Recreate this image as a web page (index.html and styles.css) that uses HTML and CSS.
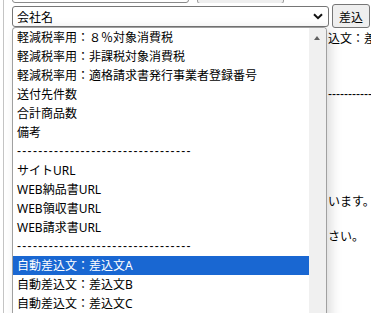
FILE: index.html
```html
<!DOCTYPE html>
<html lang="ja">
<head>
<meta charset="utf-8">
<link rel="stylesheet" href="styles.css">
</head>
<body>
<div class="page">
  <div class="top-strip">
    <div class="top-input"></div>
    <div class="top-button"></div>
  </div>
  <div class="form-row">
    <div class="select">
      <span class="select-value">会社名</span>
      <svg class="chevron" width="10" height="7" viewBox="0 0 10 7"><path d="M1 1.2 L5 5.2 L9 1.2" fill="none" stroke="#111" stroke-width="2"/></svg>
    </div>
    <button class="btn">差込</button>
  </div>
  <div class="bg-content">
    <p class="bg-line l1">込文：差</p>
    <p class="bg-line l2">-----------</p>
    <p class="bg-line l3">います。</p>
    <p class="bg-line l4">さい。</p>
  </div>
  <div class="dropdown">
    <ul class="options">
      <li>軽減税率用：８％対象消費税</li>
      <li>軽減税率用：非課税対象消費税</li>
      <li>軽減税率用：適格請求書発行事業者登録番号</li>
      <li>送付先件数</li>
      <li>合計商品数</li>
      <li>備考</li>
      <li class="sep">---------------------------------</li>
      <li>サイトURL</li>
      <li>WEB納品書URL</li>
      <li>WEB領収書URL</li>
      <li>WEB請求書URL</li>
      <li class="sep">---------------------------------</li>
      <li class="selected">自動差込文：差込文A</li>
      <li>自動差込文：差込文B</li>
      <li>自動差込文：差込文C</li>
    </ul>
    <div class="scrollbar">
      <span class="arrow-up"></span>
    </div>
  </div>
</div>
</body>
</html>
```
FILE: styles.css
```css
html, body {
  margin: 0;
  padding: 0;
  background: #fff;
}
body {
  font-family: "Noto Sans", "Noto Sans CJK JP", sans-serif;
  font-size: 12px;
  color: #000;
  overflow: hidden;
}
.page {
  position: relative;
  margin-left: 3px;
  border-left: 1px solid #c4c4c4;
  height: 313px;
  padding-left: 8px;
  box-sizing: border-box;
  overflow: hidden;
}
.top-strip {
  height: 3px;
  display: flex;
  align-items: flex-end;
  overflow: hidden;
}
.top-input {
  width: 177px;
  height: 20px;
  box-sizing: border-box;
  border: 1px solid #8a8a8a;
  border-radius: 3px;
  background: #fff;
  flex: none;
}
.top-button {
  margin-left: 8px;
  width: 87px;
  height: 20px;
  box-sizing: border-box;
  border: 1px solid #9a9a9a;
  border-radius: 3px;
  background: #efefef;
  flex: none;
  margin-bottom: -1px;
}
.form-row {
  display: flex;
  align-items: center;
  gap: 3px;
  margin-top: 1px;
  height: 24px;
}
.select {
  width: 317px;
  height: 21px;
  box-sizing: border-box;
  border: 1px solid #767676;
  border-radius: 3px;
  display: flex;
  align-items: center;
  justify-content: space-between;
  padding: 0 5px 0 4px;
  background: #fff;
}
.select-value {
  font-family: "Noto Sans CJK JP", sans-serif;
  line-height: 19px;
}
.chevron {
  display: block;
}
.btn {
  width: 38px;
  height: 24px;
  box-sizing: border-box;
  border: 1px solid #767676;
  border-radius: 3px;
  background: #efefef;
  font-family: "Noto Sans CJK JP", sans-serif;
  font-size: 12px;
  padding: 0;
  color: #000;
}
.bg-content {
  padding-left: 316px;
  white-space: nowrap;
}
.bg-line {
  margin: 0;
  line-height: 19px;
  font-family: "Noto Sans CJK JP", sans-serif;
}
.l1 { margin-top: 0; }
.l2 {
  margin-top: 38px;
  font-family: "Liberation Sans", sans-serif;
}
.l3 { margin-top: 87px; }
.l4 { margin-top: 16px; }
.dropdown {
  position: absolute;
  left: 8px;
  top: 27px;
  width: 315px;
  height: 300px;
  box-sizing: border-box;
  border: 1px solid #a0a0a0;
  border-bottom: none;
  border-radius: 4px 4px 0 0;
  background: #fff;
  display: flex;
  box-shadow: 4px 2px 12px rgba(0, 0, 0, 0.14);
  overflow: hidden;
}
.options {
  list-style: none;
  margin: 0;
  padding: 0;
  flex: 1;
  min-width: 0;
}
.options li {
  height: 19px;
  line-height: 19px;
  padding-left: 4px;
  white-space: nowrap;
}
.options li.sep {
  font-family: "Liberation Sans", sans-serif;
  letter-spacing: 1.3px;
}
.options li.selected {
  background: #1967d2;
  color: #fff;
}
.scrollbar {
  width: 17px;
  flex: none;
  background: #f0f0f0;
  position: relative;
}
.arrow-up {
  position: absolute;
  left: 5px;
  top: 8px;
  width: 0;
  height: 0;
  border-left: 3.5px solid transparent;
  border-right: 3.5px solid transparent;
  border-bottom: 4px solid #606060;
}
```
